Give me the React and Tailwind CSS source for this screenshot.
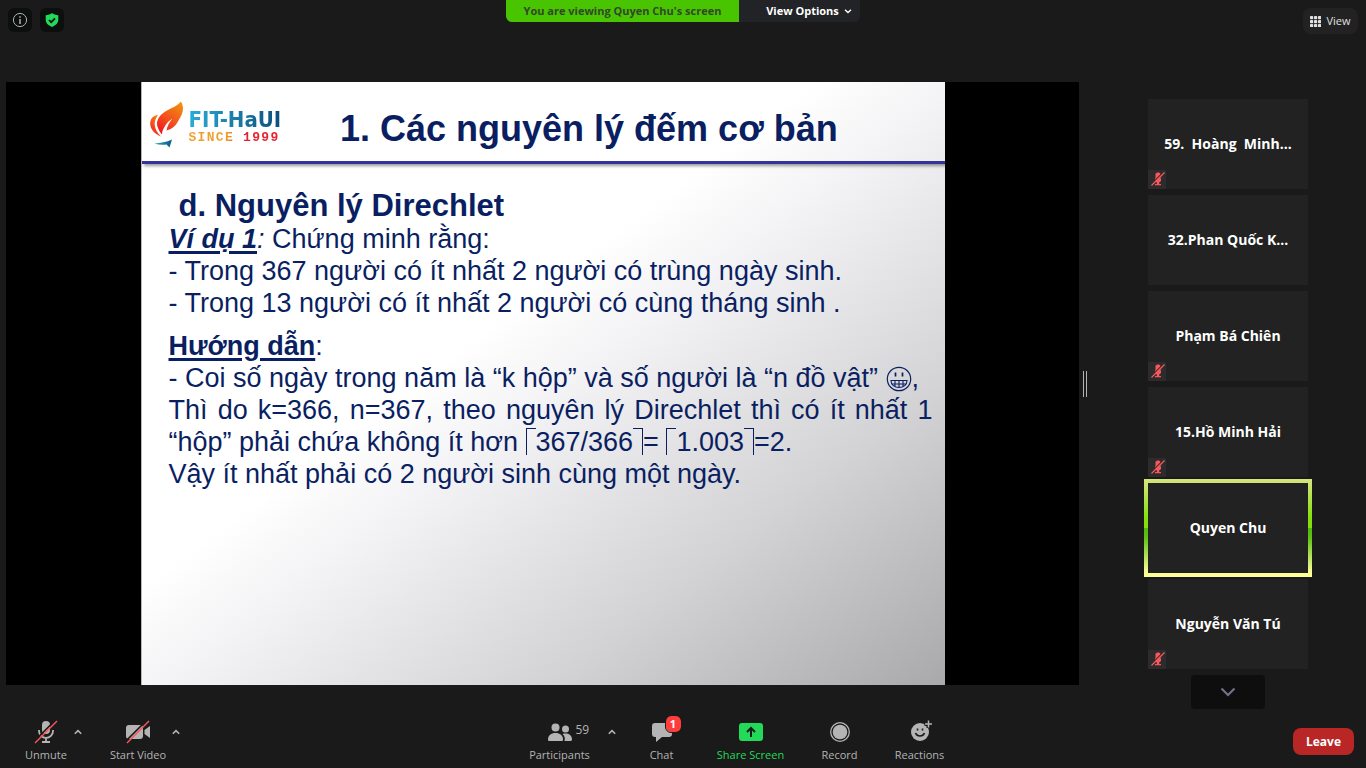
import React from "react";

const ui = "font-['Open_Sans','Noto_Sans',sans-serif]";

function Mic({ className }) {
  return (
    <svg viewBox="0 0 24 24" className={className} fill="none" aria-hidden="true">
      <rect x="8" y="1" width="8" height="13" rx="4" fill="currentColor" />
      <path d="M5 10v1a7 7 0 0 0 14 0v-1M12 18v4M8 22h8" stroke="currentColor" strokeWidth="1.8" />
      <path d="M0 21.5 22 -0.5" stroke="#1a1a1a" strokeWidth="1.6" />
      <path d="M1 23 23 1" stroke="#f9555b" strokeWidth="1.5" />
    </svg>
  );
}

function MutedBadge() {
  return (
    <span className="absolute bottom-0 left-0 flex h-[19px] w-[18px] items-center justify-center bg-[#2c2c2c] pb-px pl-px text-[#f9555b]">
      <svg viewBox="0 0 14 14" className="size-[14px]" fill="none" role="img" aria-label="Muted">
        <rect x="4.500" y="0.500" width="5" height="8" rx="2" fill="currentColor" />
        <path d="M4 6.500h6v2.500L8.200 10.500v1.500H10V13.300H4V12h1.800v-1.500L4 9Z" fill="currentColor" />
        <path d="M0 12.500 12.500 0" stroke="#2c2c2c" strokeWidth="1.2" />
        <path d="M0.500 13.500 13.500 0.500" stroke="currentColor" strokeWidth="1.3" />
      </svg>
    </span>
  );
}

function Caret({ label }) {
  return (
    <button type="button" aria-label={label} className="flex h-6 w-3 items-center justify-center text-[#b4b4b4]">
      <svg viewBox="0 0 10 10" className="size-[10px]" fill="none" aria-hidden="true">
        <path d="M1.8 6.8 5 3.6l3.2 3.2" stroke="currentColor" strokeWidth="1.6" />
      </svg>
    </button>
  );
}

function Tool({ label, width, green, children }) {
  return (
    <button
      type="button"
      className={`flex flex-col items-center gap-[3px] text-[11px] leading-4 whitespace-nowrap ${width} ${green ? "text-[#23d959]" : "text-[#b4b4b4]"}`}
    >
      <span className="relative flex h-6 items-center justify-center">{children}</span>
      <span>{label}</span>
    </button>
  );
}

function Tile({ name, muted, active }) {
  return (
    <li className="relative flex h-[90px] w-40 items-center justify-center bg-[#222222]">
      {active && (
        <span className="absolute -inset-1 bg-[linear-gradient(to_bottom,#d2e67c_0%,#cfe46e_6%,#84e00c_40%,#84e00c_50%,#52b90c_50%,#5fc018_60%,#ffff96_96%)]" />
      )}
      {active && <span className="absolute inset-0 bg-[#222222]" />}
      <span className="relative text-[14px] leading-5 font-bold whitespace-pre text-white">{name}</span>
      {muted && <MutedBadge />}
    </li>
  );
}

const people = [
  { name: "59.  Hoàng  Minh...", muted: true },
  { name: "32.Phan Quốc K...", muted: false },
  { name: "Phạm Bá Chiên", muted: true },
  { name: "15.Hồ Minh Hải", muted: true },
  { name: "Quyen Chu", active: true },
  { name: "Nguyễn Văn Tú", muted: true },
];

function Logo() {
  return (
    <div className="flex items-center gap-1 pt-1">
      <svg viewBox="0 0 36 48" className="h-12 w-9" aria-hidden="true">
        <defs>
          <linearGradient id="flame" x1="0.2" y1="1" x2="0.8" y2="0">
            <stop offset="0" stopColor="#f0141e" />
            <stop offset="0.45" stopColor="#f4501e" />
            <stop offset="1" stopColor="#f0900f" />
          </linearGradient>
          <linearGradient id="handle" x1="0" y1="0" x2="1" y2="0">
            <stop offset="0" stopColor="#2aa5d0" />
            <stop offset="1" stopColor="#0b5a80" />
          </linearGradient>
        </defs>
        <path d="M32 1.500C28.500 6 21 8.500 15.500 12 9 16.500 6.500 22 9 28c1 2.600 2.200 4.500 4 6.500 0-3 1-5 2.500-7.500 1.500-3 4-6 8-8.500-3 3.500-5.500 8-6 12 6-1.500 9.500-5 12-10 2.500-4 4.500-8 4.500-12 0-3-1-5-2-7Z" fill="url(#flame)" />
        <path d="M9 15C4 15.500 1 19 1.200 24 1.500 29.500 6 34 12 36.500 8.500 33 6 29 5.700 24.500 5.500 21 7 18 9 15Z" fill="url(#flame)" />
        <path d="M5.500 43.500c6-.3 12-1.500 17.500-4L20.500 47.500 17.500 44.500C13 45 9 44.700 5.500 43.500Z" fill="url(#handle)" />
      </svg>
      <div className="flex flex-col pt-1">
        <span className="bg-linear-to-r from-[#2aacd8] to-[#0b4f7c] bg-clip-text font-['DejaVu_Sans_Condensed','DejaVu_Sans',sans-serif] text-[22px] leading-6 font-bold text-transparent">
          FIT-HaUI
        </span>
        <span className="bg-linear-to-r from-[#eda02c] from-40% to-[#e6202e] to-60% bg-clip-text font-['Liberation_Mono',monospace] text-[13px] leading-3 font-bold tracking-widest text-transparent">
          SINCE 1999
        </span>
      </div>
    </div>
  );
}

function Grin() {
  return (
    <svg viewBox="0 0 26 26" className="inline-block size-[26px] align-[-5px]" fill="none" stroke="currentColor" role="img" aria-label="grinning face">
      <circle cx="13" cy="13" r="11.700" strokeWidth="1.2" />
      <path d="M9.500 6.500v4M16.500 6.500v4" strokeWidth="1.700" />
      <path d="M5 14.500h16c0 4.500-3.500 7-8 7s-8-2.500-8-7ZM6 18h14M9 14.500v6M13 14.500v7M17 14.500v6" strokeWidth="1.1" />
    </svg>
  );
}

function Ceil({ children }) {
  return (
    <span className="whitespace-nowrap">
      <span role="img" aria-label="left ceiling" className="inline-block h-[27px] w-[10px] border-t border-l border-current align-[-4px]" />
      {children}
      <span role="img" aria-label="right ceiling" className="inline-block h-[27px] w-[10px] border-t border-r border-current align-[-4px]" />
    </span>
  );
}

function Slide() {
  return (
    <article className="flex aspect-[4/3] h-full flex-col border-l border-[#b8b8b8] bg-[linear-gradient(to_bottom_right,#ffffff_42%,#f4f3f5_51%,#d3d2d4_75%,#a9a8aa_100%)] font-['Liberation_Sans',Arial,sans-serif] text-[#0a1f62]">
      <header className="flex h-[82px] items-center border-b-[3px] border-[#333399] pl-[7px] shadow-[2px_2px_3px_rgba(0,0,0,0.4)]">
        <Logo />
        <h1 className="flex-1 pt-[14px] pr-12 text-center text-[36px] leading-10 font-bold">1. Các nguyên lý đếm cơ bản</h1>
      </header>
      <div className="pt-[25px] pr-3 pl-[27px] text-[27px] leading-8">
        <h2 className="pl-[10px] text-[31px] leading-[34px] font-bold">d. Nguyên lý Direchlet</h2>
        <p>
          <i><b className="underline decoration-[3px] underline-offset-[3px]">Ví dụ 1</b>:</i> Chứng minh rằng:
        </p>
        <p>- Trong 367 người có ít nhất 2 người có trùng ngày sinh.</p>
        <p>- Trong 13 người có ít nhất 2 người có cùng tháng sinh .</p>
        <p className="mt-[11px]">
          <b className="underline decoration-[3px] underline-offset-[3px]">Hướng dẫn</b>:
        </p>
        <p>- Coi số ngày trong năm là “k hộp” và số người là “n đồ vật” <Grin />,</p>
        <p className="text-justify">
          Thì do k=366, n=367, theo nguyên lý Direchlet thì có ít nhất 1 “hộp” phải chứa không ít hơn <Ceil>367/366</Ceil>= <Ceil>1.003</Ceil>=2.
        </p>
        <p>Vậy ít nhất phải có 2 người sinh cùng một ngày.</p>
      </div>
    </article>
  );
}

export default function App() {
  return (
    <div className={`flex h-screen flex-col overflow-hidden bg-[#1a1a1a] ${ui}`}>
      <header className="grid h-[82px] shrink-0 grid-cols-[1fr_auto_1fr] items-start px-2">
        <div className="flex gap-2 pt-2">
          <button type="button" aria-label="Meeting information" className="flex size-6 items-center justify-center rounded-md bg-[#0d0e0e] text-[#b0b0b0]">
            <svg viewBox="0 0 16 16" className="size-4" fill="none" stroke="currentColor" aria-hidden="true">
              <circle cx="8" cy="8" r="6.600" />
              <path d="M8 7v5M8 4.200v1.500" strokeWidth="1.5" />
            </svg>
          </button>
          <button type="button" aria-label="Encryption" className="flex size-6 items-center justify-center rounded-md bg-[#0d0e0e]">
            <svg viewBox="0 0 16 16" className="size-4" fill="none" aria-hidden="true">
              <path d="M8 1c1.800 1.500 3.700 2.100 6.300 2.200v4.300c0 3.500-2.300 5.800-6.300 7.500-4-1.700-6.300-4-6.300-7.500V3.200C4.300 3.100 6.200 2.500 8 1Z" fill="#23d959" />
              <path d="m5 8 2.200 2.200L11 6.300" stroke="#0d0e0e" strokeWidth="1.7" />
            </svg>
          </button>
        </div>
        <div className="flex h-[22px] overflow-hidden rounded-b-md text-[11px] leading-[22px] font-bold">
          <div className="w-[233px] bg-[#48c400] text-center text-[#33472a]">You are viewing Quyen Chu's screen</div>
          <button type="button" className="flex w-[121px] items-center justify-center gap-1 bg-[#222326] pl-5 text-white">
            View Options
            <svg viewBox="0 0 10 10" className="size-[10px]" fill="none" aria-hidden="true">
              <path d="M2 3.700 5 6.500l3-2.800" stroke="currentColor" strokeWidth="1.4" />
            </svg>
          </button>
        </div>
        <div className="flex justify-end pt-2">
          <button type="button" className="flex h-[26px] w-[55px] items-center justify-center gap-[5px] rounded-lg bg-[#222222] text-[11px] text-[#e0e0e0]">
            <svg viewBox="0 0 11 11" className="size-[11px]" fill="currentColor" aria-hidden="true">
              {[0, 4, 8].map((y) => [0, 4, 8].map((x) => <rect key={`${x}-${y}`} x={x} y={y} width="3.200" height="3.200" rx="0.8" />))}
            </svg>
            View
          </button>
        </div>
      </header>

      <main className="flex min-h-0 flex-1">
        <section className="mb-6 ml-[6px] flex min-w-0 flex-1 justify-center bg-black">
          <Slide />
        </section>
        <div role="separator" aria-orientation="vertical" className="mb-6 ml-1 h-[26px] w-1 self-center border-x border-[#b4b4b4]" />
        <aside className="mr-[58px] ml-[61px] flex flex-col items-center justify-end gap-[6px]">
          <ul className="flex flex-col gap-[6px]">
            {people.map((p) => (
              <Tile key={p.name} {...p} />
            ))}
          </ul>
          <button type="button" aria-label="Next participants" className="flex h-[34px] w-[74px] items-center justify-center rounded bg-[#0e0e0e] text-[#74748c]">
            <svg viewBox="0 0 16 16" className="size-4" fill="none" aria-hidden="true">
              <path d="m1.500 4.500 6.500 6.500 6.500-6.500" stroke="currentColor" strokeWidth="2" />
            </svg>
          </button>
        </aside>
      </main>

      <footer className="flex h-[59px] shrink-0 items-start justify-between pt-[11px] pr-3 pl-5">
        <div className="flex gap-[22px]">
          <div className="flex">
            <Tool label="Unmute" width="w-[52px]">
              <Mic className="size-6" />
            </Tool>
            <Caret label="Audio options" />
          </div>
          <div className="flex">
            <Tool label="Start Video" width="w-16">
              <svg viewBox="0 0 26 24" className="h-6 w-[26px]" aria-hidden="true">
                <rect x="1" y="5" width="17" height="14" rx="3" fill="currentColor" />
                <path d="M19.500 10 25 6v12l-5.500-4Z" fill="currentColor" />
                <path d="M0.500 21.500 22.500 -0.500" stroke="#1a1a1a" strokeWidth="1.600" />
                <path d="M2 23 24 1" stroke="#f9555b" strokeWidth="1.500" />
              </svg>
            </Tool>
            <Caret label="Video options" />
          </div>
        </div>
        <div className="flex gap-4">
          <div className="flex gap-[6px]">
            <Tool label="Participants" width="w-20">
              <svg viewBox="0 0 24 24" className="size-6" fill="currentColor" aria-hidden="true">
                <circle cx="7.500" cy="7.500" r="4" />
                <path d="M0 19.500C0 15.500 3 13 7.500 13s7.500 2.500 7.500 6.500c0 1-.5 1.500-1.500 1.500h-12C.5 21 0 20.500 0 19.500Z" />
                <circle cx="17.500" cy="9" r="3.500" />
                <path d="M16.500 21c1-3-.2-5.500-2-7 4.500-1.500 9.500.5 9.500 5.200 0 1.200-.6 1.800-1.600 1.800Z" />
              </svg>
              <span className="absolute left-7 -mt-1 text-[12px]">59</span>
            </Tool>
            <Caret label="Participants options" />
          </div>
          <Tool label="Chat" width="w-14">
            <svg viewBox="0 0 24 24" className="size-6" fill="currentColor" aria-hidden="true">
              <path d="M5 3h14a3 3 0 0 1 3 3v8a3 3 0 0 1-3 3h-7l-6 5v-5H5a3 3 0 0 1-3-3V6a3 3 0 0 1 3-3Z" />
            </svg>
            <span className="absolute -top-1 left-4 flex h-4 w-[15px] items-center justify-center rounded-[5px] bg-[#ff3d3d] text-[11px] font-bold text-white outline outline-[#1a1a1a]">1</span>
          </Tool>
          <Tool label="Share Screen" width="w-[90px]" green>
            <svg viewBox="0 0 24 24" className="size-6" aria-hidden="true">
              <rect y="3" width="24" height="18" rx="3" fill="currentColor" />
              <path d="M12 17V8.500M8 12l4-4 4 4" fill="none" stroke="#1a1a1a" strokeWidth="2" />
            </svg>
          </Tool>
          <Tool label="Record" width="w-14">
            <svg viewBox="0 0 24 24" className="size-6" aria-hidden="true">
              <circle cx="12" cy="12" r="9.300" fill="none" stroke="currentColor" strokeWidth="1.300" />
              <circle cx="12" cy="12" r="7.300" fill="currentColor" />
            </svg>
          </Tool>
          <Tool label="Reactions" width="w-[72px]">
            <svg viewBox="0 0 24 24" className="size-6 overflow-visible" fill="none" aria-hidden="true">
              <circle cx="12" cy="12" r="9" fill="currentColor" />
              <path d="M9.500 8.500v2M14.500 8.500v2M7.500 13c1.500 4 7.500 4 9 0" stroke="#1a1a1a" strokeWidth="1.600" />
              <path d="M20.500 0v8M16.500 4h8" stroke="#1a1a1a" strokeWidth="4" />
              <path d="M20.500 0.500v7M17 4h7" stroke="currentColor" strokeWidth="1.500" />
            </svg>
          </Tool>
        </div>
        <button type="button" className="mt-2 h-[27px] w-[61px] rounded-lg bg-[#b92626] text-[12px] leading-4 font-bold text-white">Leave</button>
      </footer>
    </div>
  );
}
